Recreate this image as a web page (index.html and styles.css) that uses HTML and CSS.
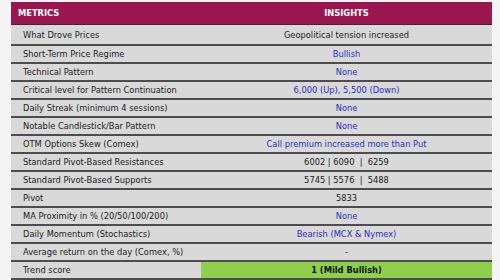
FILE: index.html
```html
<!DOCTYPE html>
<html>
<head>
<meta charset="utf-8">
<link rel="stylesheet" href="styles.css">
</head>
<body>
<table class="grid">
  <thead>
    <tr><th class="metric">METRICS</th><th class="insight">INSIGHTS</th></tr>
  </thead>
  <tbody>
    <tr class="first"><td class="metric">What Drove Prices</td><td class="insight">Geopolitical tension increased</td></tr>
    <tr><td class="metric">Short-Term Price Regime</td><td class="insight blue">Bullish</td></tr>
    <tr><td class="metric">Technical Pattern</td><td class="insight blue">None</td></tr>
    <tr><td class="metric">Critical level for Pattern Continuation</td><td class="insight blue">6,000 (Up), 5,500 (Down)</td></tr>
    <tr><td class="metric">Daily Streak (minimum 4 sessions)</td><td class="insight blue">None</td></tr>
    <tr><td class="metric">Notable Candlestick/Bar Pattern</td><td class="insight blue">None</td></tr>
    <tr><td class="metric">OTM Options Skew (Comex)</td><td class="insight blue">Call premium increased more than Put</td></tr>
    <tr><td class="metric">Standard Pivot-Based Resistances</td><td class="insight">6002 | 6090 &nbsp;| &nbsp;6259</td></tr>
    <tr><td class="metric">Standard Pivot-Based Supports</td><td class="insight">5745 | 5576 &nbsp;| &nbsp;5488</td></tr>
    <tr><td class="metric">Pivot</td><td class="insight">5833</td></tr>
    <tr><td class="metric">MA Proximity in % (20/50/100/200)</td><td class="insight blue">None</td></tr>
    <tr><td class="metric">Daily Momentum (Stochastics)</td><td class="insight blue">Bearish (MCX &amp; Nymex)</td></tr>
    <tr><td class="metric">Average return on the day (Comex, %)</td><td class="insight">-</td></tr>
    <tr class="last"><td class="metric">Trend score</td><td class="insight score">1 (Mild Bullish)</td></tr>
  </tbody>
</table>
</body>
</html>
```

FILE: styles.css
```css
html, body {
  margin: 0;
  padding: 0;
  background: #f5f5f5;
}
body {
  padding: 2px 0 0 11px;
  font-family: "DejaVu Sans", Verdana, sans-serif;
  font-size: 8.3px;
  color: #1c1c1c;
}
.grid {
  border-collapse: collapse;
  width: 481px;
  table-layout: fixed;
}
.grid th, .grid td {
  padding: 0;
  white-space: nowrap;
}
.grid th {
  background: #9a164f;
  color: #ffffff;
  font-weight: bold;
  height: 22px;
  border-bottom: 1px solid #3a2a30;
}
.grid th.metric {
  width: 183px;
  text-align: left;
  padding-left: 7px;
}
.grid td {
  background: #d9d9d9;
  height: 16px;
  border-bottom: 2px solid #4d4d4d;
}
.grid tr.first td {
  height: 19px;
}
.grid td.metric {
  padding-left: 12px;
}
.grid .insight {
  text-align: center;
}
.grid td.blue {
  color: #2b2bc4;
}
.grid td.score {
  background: #8fcf4c;
  color: #111;
  font-weight: bold;
}
```
